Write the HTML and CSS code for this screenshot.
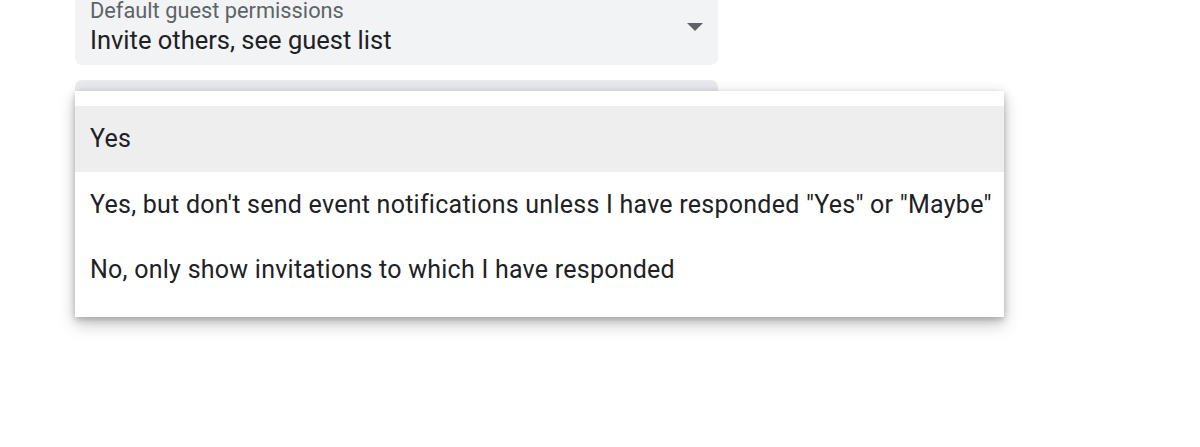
FILE: index.html
```html
<!DOCTYPE html>
<html>
<head>
<meta charset="utf-8">
<link rel="stylesheet" href="styles.css">
</head>
<body>
<div class="page">
  <div class="field">
    <div class="field-text">
      <div class="label">Default guest permissions</div>
      <div class="value">Invite others, see guest list</div>
    </div>
    <svg class="arrow" width="16" height="8" viewBox="0 0 16 8"><path d="M0 0 L16 0 L8 8 Z" fill="#5f6368"/></svg>
  </div>
  <div class="field2-wrap">
    <div class="field field2"></div>
    <div class="menu">
      <div class="item active">Yes</div>
      <div class="item">Yes, but don't send event notifications unless I have responded "Yes" or "Maybe"</div>
      <div class="item">No, only show invitations to which I have responded</div>
    </div>
  </div>
</div>
</body>
</html>
```
FILE: styles.css
```css
html, body {
  margin: 0;
  padding: 0;
  background: #ffffff;
}
body {
  font-family: Roboto, "Liberation Sans", sans-serif;
  color: #202124;
  width: 1200px;
  height: 447px;
  overflow: hidden;
}
.page {
  padding-left: 75px;
  margin-top: -15px;
}
.field {
  width: 643px;
  height: 80px;
  background: #f1f3f4;
  border-radius: 7px;
  display: flex;
  align-items: center;
  box-sizing: border-box;
  padding: 0 15px;
}
.field-text {
  flex: 1;
  align-self: flex-start;
  padding-top: 13.5px;
}
.label {
  font-size: 21.8px;
  line-height: 24px;
  color: #5f6368;
}
.value {
  font-size: 25.5px;
  line-height: 30px;
  margin-top: 2.7px;
  color: #202124;
}
.arrow {
  margin-top: 4px;
}
.field2-wrap {
  position: relative;
  margin-top: 15px;
}
.field2 {
  height: 60px;
  background: #e8eaed;
}
.menu {
  position: absolute;
  left: 0;
  top: 11px;
  width: 929px;
  background: #ffffff;
  padding: 15px 0 14px;
  box-shadow: 0 8px 16px rgba(0,0,0,0.2), 0 3px 6px rgba(0,0,0,0.18), 0 0 12px rgba(0,0,0,0.08);
}
.item {
  height: 65.5px;
  display: flex;
  align-items: center;
  padding-left: 15px;
  font-size: 25px;
  letter-spacing: 0.25px;
  color: #202124;
  white-space: nowrap;
}
.item.active {
  background: #eeeeee;
}
```
